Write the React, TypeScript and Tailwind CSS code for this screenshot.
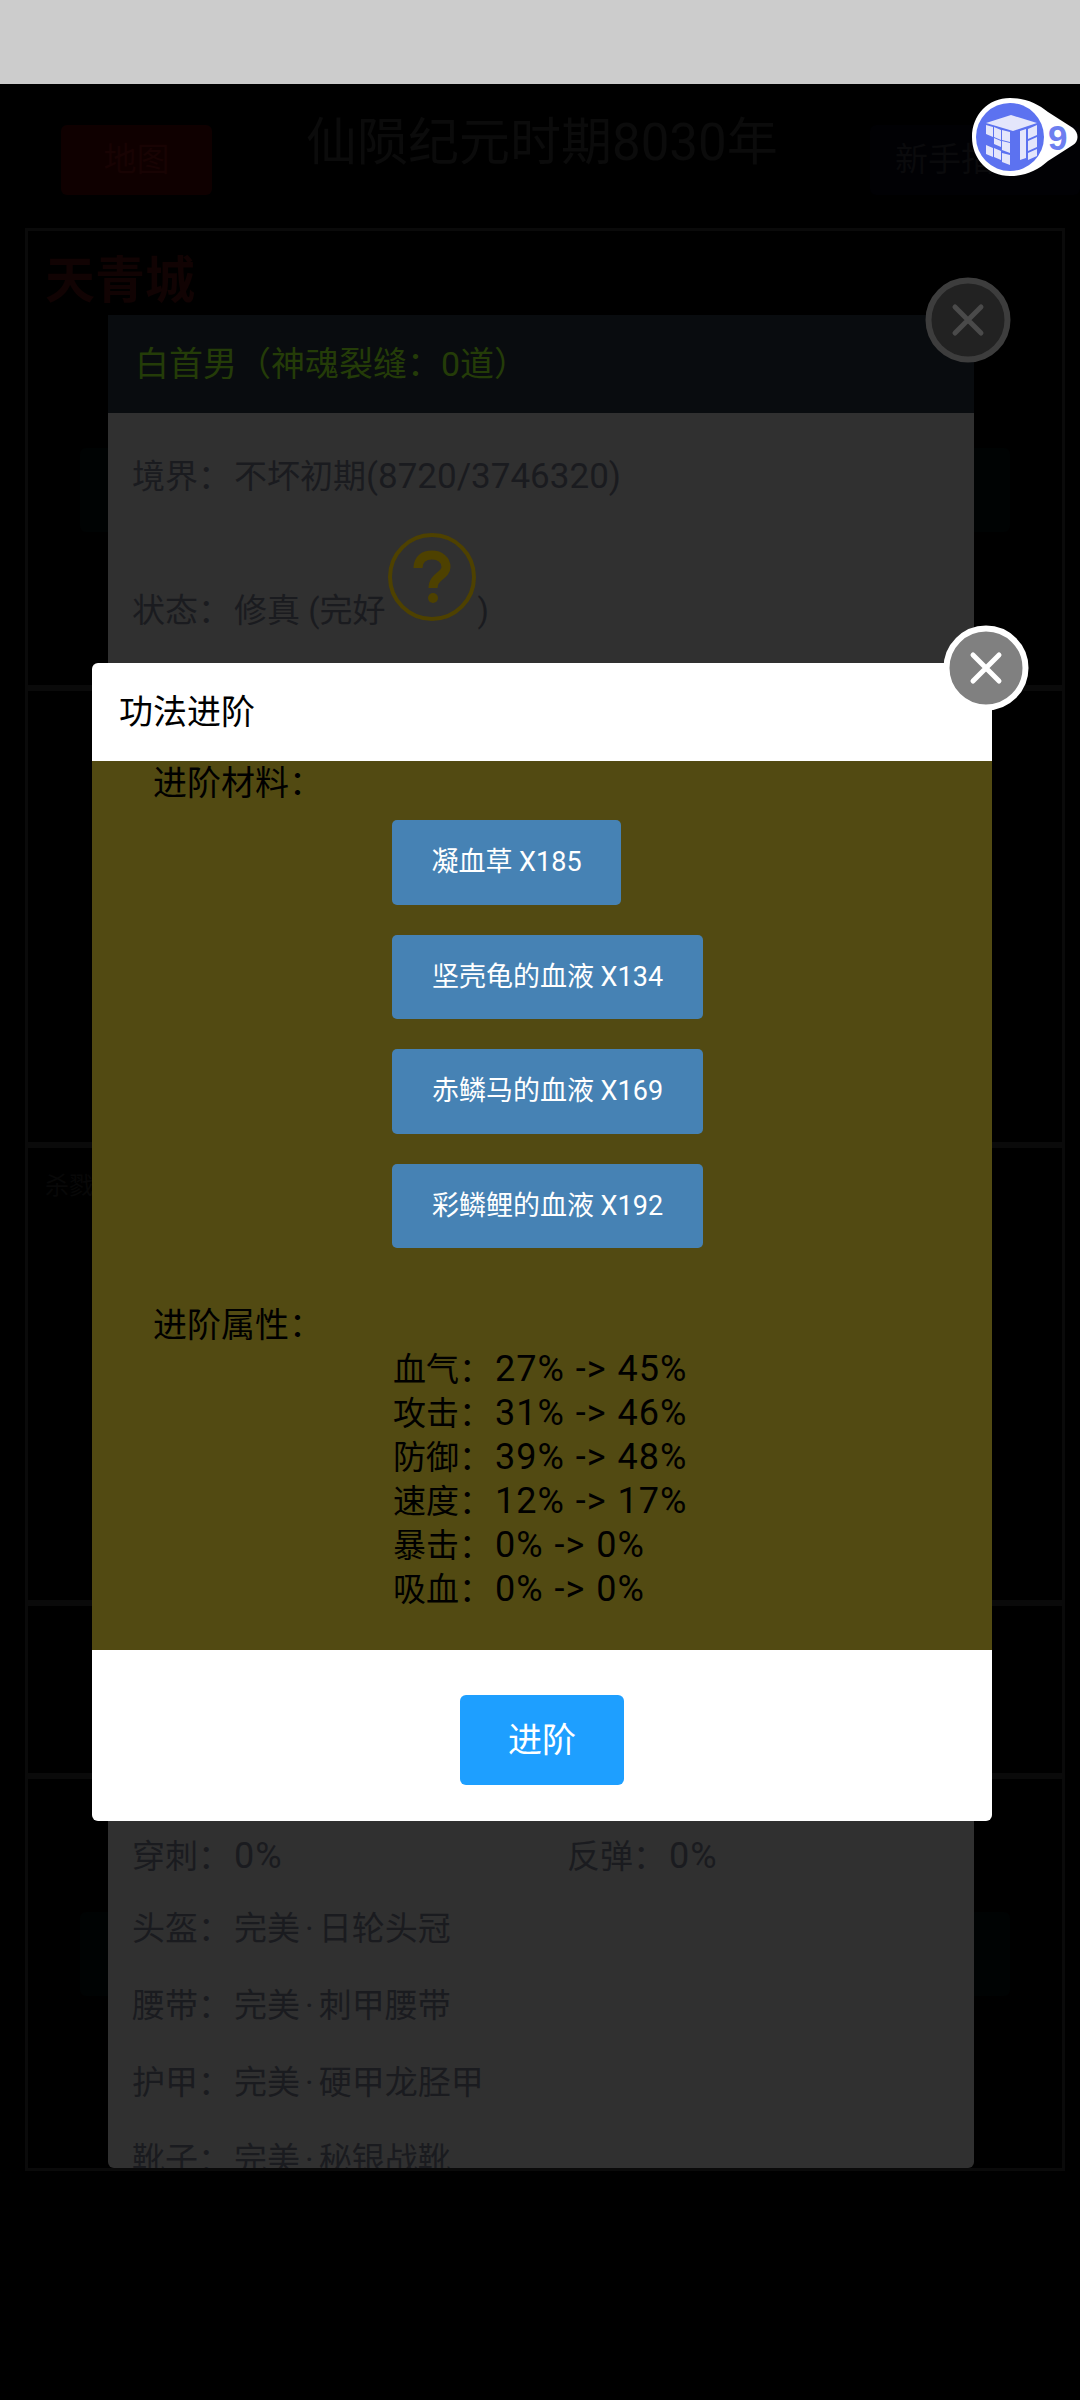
const materials = ['坚壳龟的血液 X134', '赤鳞马的血液 X169', '彩鳞鲤的血液 X192']

const attrs = [
  ['血气', '27% -> 45%'],
  ['攻击', '31% -> 46%'],
  ['防御', '39% -> 48%'],
  ['速度', '12% -> 17%'],
  ['暴击', '0% -> 0%'],
  ['吸血', '0% -> 0%'],
]

const gear = [
  ['头盔', '日轮头冠'],
  ['腰带', '刺甲腰带'],
  ['护甲', '硬甲龙胫甲'],
  ['靴子', '秘银战靴'],
]

const Num = ({ children }: { children: string }) => (
  <span className="ml-[3px] text-[36px] tracking-[1px] [word-spacing:1px]">{children}</span>
)

const CloseIcon = ({ ring, fill, cross }: { ring: string; fill: string; cross: string }) => (
  <svg width="88" height="88" viewBox="0 0 88 88">
    <circle cx="44" cy="44" r="39.5" fill={fill} stroke={ring} strokeWidth="6" />
    <path d="M31 31L57 57M57 31L31 57" stroke={cross} strokeWidth="5" strokeLinecap="round" />
  </svg>
)

const Logo = () => (
  <svg width="200" height="130" viewBox="0 0 200 130">
    <path d="M130 28C146 28 158 34 168 42L193 58C199 63 199 71 193 75L168 91C158 100 146 106 130 106C108 106 92 89 92 67C92 45 108 28 130 28Z" fill="#fff" />
    <circle cx="130" cy="67" r="34" fill="#5c72f0" />
    <g fill="#e4e6fb">
      <path d="M106 53L131 45L157 53L133 61Z" />
      <path d="M106 55L113 57V67L106 64Z" />
      <path d="M114 57L121 60V70L114 67Z" />
      <path d="M122 60L130 62V72L122 70Z" />
      <path d="M114 68L121 71V77L114 74Z" />
      <path d="M122 71L130 73V83L122 80Z" />
      <path d="M106 75L113 78V87L106 84Z" />
      <path d="M114 78L121 81V90L114 87Z" />
      <path d="M122 83L130 85V95L122 92Z" />
      <path d="M148 59L157 55V65L148 69Z" />
      <path d="M148 71L157 67V77L148 81Z" />
      <path d="M148 83L157 79V86L148 90Z" />
      <path d="M140 61L146 59V88L140 90Z" />
    </g>
    <text x="168" y="80" fontFamily="'Liberation Sans', sans-serif" fontWeight="700" fontSize="35" fill="#6d7ff0">9</text>
  </svg>
)

export default function App() {
  return (
    <div className="relative w-[1080px] h-[2400px] overflow-hidden bg-black font-[Roboto,'Noto_Sans_CJK_SC',sans-serif] text-[33px]">
      <div className="h-[84px] bg-[#cccccc]" />

      <header className="relative h-[144px]">
        <div className="flex items-start justify-between pl-[61px] pt-[41px]">
          <div className="flex h-[70px] w-[151px] items-center justify-center rounded-md bg-[#0f0000] text-[#180303]">地图</div>
          <div className="flex h-[70px] w-[210px] items-center pl-[25px] rounded-md bg-[#010104] text-[#0a0a0c]">新手指南</div>
        </div>
        <h1 className="absolute left-[306px] top-[26px] text-[51px] leading-[66px] font-normal text-[#0b0b0b]">仙陨纪元时期8030年</h1>
      </header>

      <main className="ml-[25px] mr-[15px] h-[1943px] border-[3px] border-[#0a0a0a]">
        <section className="h-[460px] border-b-[6px] border-[#0a0a0a]">
          <h2 className="pl-[17px] pt-[20px] text-[50px] font-bold leading-[60px] text-[#110303]">天青城</h2>
          <div className="mx-[52px] mt-[137px] h-[84px] rounded-md bg-[#000303]" />
        </section>
        <section className="h-[457px] border-b-[6px] border-[#0a0a0a]" />
        <section className="h-[458px] border-b-[6px] border-[#0a0a0a]">
          <p className="pl-[17px] pt-[20px] text-[24px] text-[#080808]">杀戮</p>
        </section>
        <section className="h-[173px] border-b-[6px] border-[#0a0a0a]" />
        <section className="pt-[133px]">
          <div className="mx-[52px] h-[84px] rounded-md bg-[#000303]" />
        </section>
      </main>

      <div className="absolute left-[108px] top-[315px] h-[1853px] w-[866px] overflow-hidden rounded-b-md bg-[#303030] text-[#1a1b1f]">
        <div className="flex h-[98px] items-center bg-[#090c0f] pl-[27px] text-[34px] text-[#243c08]">白首男（神魂裂缝：0道）</div>
        <p className="ml-[24px] mt-[42px] leading-[44px]">
          境界：<span className="ml-[3px]">不坏初期</span><span className="text-[35px]">(8720/3746320)</span>
        </p>
        <div className="ml-[24px] mt-[90px] flex h-[44px] items-center">
          状态：<span className="ml-[3px]">修真 (完好</span>
          <svg className="-mt-[68px] ml-[2px]" width="90" height="90" viewBox="0 0 90 90">
            <circle cx="45" cy="45" r="42" fill="none" stroke="#4e4100" strokeWidth="4" />
            <path d="M31 36C31 27 37 23 45 23C53 23 59 28 59 35C59 44 46 44 46 56" fill="none" stroke="#4e4100" strokeWidth="9" />
            <circle cx="46" cy="66" r="5" fill="#4e4100" />
          </svg>
          )
        </div>
        <div className="mt-[1201px] flex h-[44px] items-center pl-[24px] leading-[44px]">
          <span className="w-[435px]">穿刺：<Num>0%</Num></span>
          <span>反弹：<Num>0%</Num></span>
        </div>
        {gear.map(([name, value], i) => (
          <p key={name} className={`${i === 0 ? 'mt-[29px]' : 'mt-[33px]'} ml-[24px] leading-[44px]`}>
            {name}：<span className="ml-[3px]">完美</span><span className="mx-[5px]">·</span>{value}
          </p>
        ))}
      </div>

      <div className="absolute left-[924px] top-[276px]">
        <CloseIcon ring="#3d3d3d" fill="#222222" cross="#4a4a4a" />
      </div>

      <div className="absolute left-[880px] top-[70px]">
        <Logo />
      </div>

      <div className="absolute left-[92px] top-[663px] w-[900px] rounded-md bg-white">
        <div className="flex h-[98px] items-center pl-[27px] text-[34px] text-black">功法进阶</div>
        <div className="bg-[#524a12] pl-[61px] pb-[39px] text-black">
          <p className="text-[34px] leading-[44px]">进阶材料：</p>
          <div className="mt-[15px] ml-[239px] flex flex-col items-start gap-[30px] text-[27px] text-white">
            <button className="h-[84.5px] w-[229px] rounded-[5px] bg-[#4682b4]">凝血草 X185</button>
            {materials.map((m) => (
              <button key={m} className="h-[84.5px] w-[311px] rounded-[5px] bg-[#4682b4]">{m}</button>
            ))}
          </div>
          <p className="mt-[55px] text-[34px] leading-[44px]">进阶属性：</p>
          <div className="ml-[240px]">
            {attrs.map(([name, value]) => (
              <p key={name} className="h-[44px] leading-[44px]">
                {name}：<Num>{value}</Num>
              </p>
            ))}
          </div>
        </div>
        <div className="flex justify-center pt-[45px] pb-[36px]">
          <button className="h-[90px] w-[164px] rounded-md bg-[#1e9fff] text-[34px] text-white">进阶</button>
        </div>
      </div>

      <div className="absolute left-[942px] top-[624px]">
        <CloseIcon ring="#ffffff" fill="#808080" cross="#ffffff" />
      </div>
    </div>
  )
}
